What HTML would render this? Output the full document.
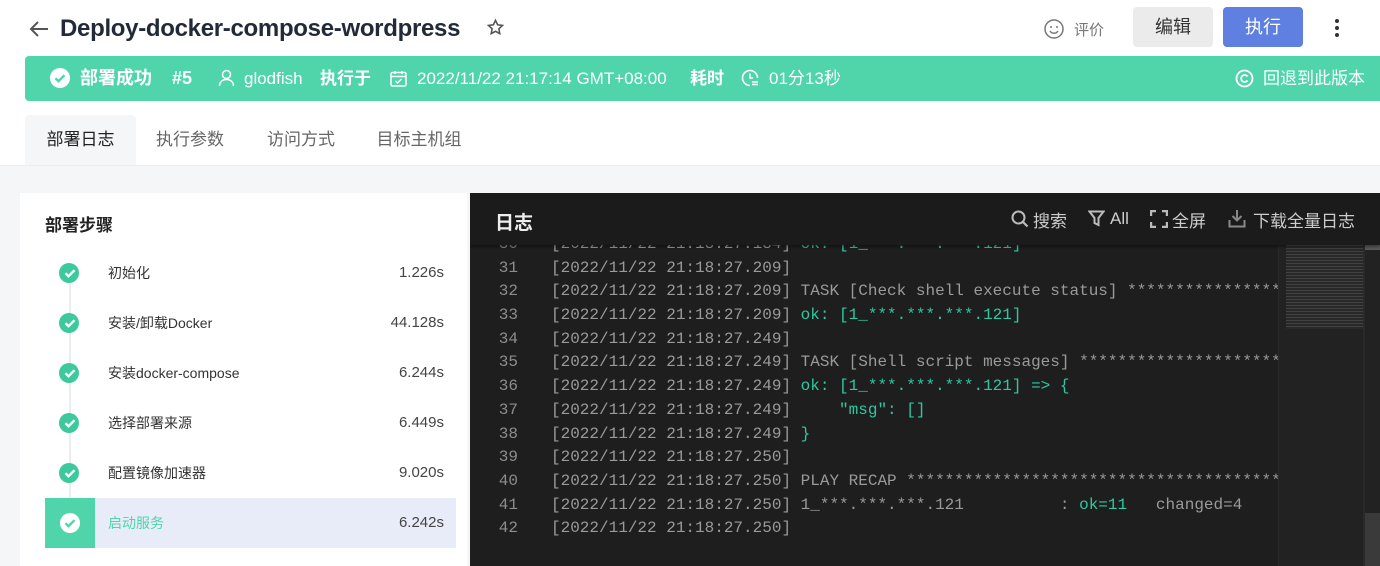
<!DOCTYPE html>
<html><head><meta charset="utf-8"><style>
*{margin:0;padding:0;box-sizing:border-box}
body{width:1380px;height:566px;overflow:hidden;background:#fff;font-family:"Liberation Sans","Noto Sans CJK SC",sans-serif;position:relative}
.abs{position:absolute}
.title{left:60px;top:15px;font-size:24px;font-weight:bold;color:#222a3a;letter-spacing:-0.3px}
.bar{left:25px;top:56px;width:1355px;height:45px;background:#50d4aa;border-radius:4px 0 0 4px;color:#fff;font-size:17px}
.bar span{position:absolute;top:0;line-height:45px;height:45px;white-space:nowrap}
.tabs{top:115px;left:25px;height:50px;font-size:17px;color:#666}
.tab{position:absolute;top:0;height:50px;line-height:50px;text-align:center}
.gray{left:0;top:165px;width:1380px;height:401px;background:#f5f6f8;border-top:1px solid #eceef2}
.left{left:20px;top:193px;width:447px;height:373px;background:#fff}
.step{position:absolute;left:25px;width:411px;height:50px;font-size:14px;color:#333}
.step .c{position:absolute;left:14px;top:15px;width:20px;height:20px;border-radius:50%;background:#3ec99c}
.step .n{position:absolute;left:63px;top:0;line-height:50px}
.step .t{position:absolute;right:12px;top:0;line-height:50px;font-size:15px;color:#444}
.dark{left:470px;top:193px;width:910px;height:373px;background:#1e1e1e;overflow:hidden}
.log{position:absolute;left:0;top:40px;font-family:"Liberation Mono",monospace;font-size:16px;color:#9a9a9a}
.log div{height:23.7px;line-height:23.7px;white-space:pre}
.ln{display:inline-block;width:81px;text-align:right;padding-right:33px;color:#8d8d8d}
.g{color:#2cc9a2}
.hd{position:absolute;left:0;top:0;width:910px;height:52px;background:#1b1b1b;box-shadow:0 2px 3px rgba(0,0,0,.4)}
</style></head><body>
<svg class="abs" style="left:28px;top:18px" width="22" height="22" viewBox="0 0 22 22"><path d="M20 11H3M10 4l-7 7 7 7" stroke="#555" stroke-width="2" fill="none"/></svg>
<div class="abs title">Deploy-docker-compose-wordpress</div>
<svg class="abs" style="left:486px;top:18px" width="19" height="19" viewBox="0 0 24 24"><path d="M12 3l2.7 5.6 6.1.8-4.5 4.2 1.1 6.1L12 16.8 6.6 19.7l1.1-6.1L3.2 9.4l6.1-.8z" stroke="#555" stroke-width="2" fill="none"/></svg>
<svg class="abs" style="left:1043px;top:18px" width="22" height="22" viewBox="0 0 22 22"><circle cx="11" cy="11" r="9" stroke="#777" stroke-width="1.5" fill="none"/><circle cx="8" cy="9" r="1" fill="#777"/><circle cx="14" cy="9" r="1" fill="#777"/><path d="M7 13c2 3 6 3 8 0" stroke="#777" stroke-width="1.5" fill="none"/></svg>
<div class="abs" style="left:1074px;top:19px;font-size:15px;color:#777">评价</div>
<div class="abs" style="left:1133px;top:7px;width:80px;height:40px;background:#ebebeb;border-radius:4px;font-size:18px;color:#333;text-align:center;line-height:40px">编辑</div>
<div class="abs" style="left:1223px;top:7px;width:80px;height:40px;background:#5f7fe1;border-radius:4px;font-size:18px;color:#fff;text-align:center;line-height:40px">执行</div>
<div class="abs" style="left:1335px;top:19px;width:4px;height:4px;border-radius:2px;background:#333;box-shadow:0 7px 0 #333,0 14px 0 #333"></div>

<div class="abs bar">
<svg style="position:absolute;left:25px;top:12px" width="20" height="20" viewBox="0 0 20 20"><circle cx="10" cy="10" r="10" fill="#fff"/><path d="M5.5 10.2l3 3 6-6" stroke="#50d4aa" stroke-width="2.4" fill="none"/></svg>
<span style="left:55px;font-weight:bold;font-size:18px">部署成功</span>
<span style="left:147px;font-weight:bold;font-size:18px">#5</span>
<svg style="position:absolute;left:193px;top:13px" width="17" height="18" viewBox="0 0 17 18"><circle cx="8.5" cy="5.5" r="4" stroke="#fff" stroke-width="1.5" fill="none"/><path d="M1.5 17c0-4 3-6.5 7-6.5s7 2.5 7 6.5" stroke="#fff" stroke-width="1.5" fill="none"/></svg>
<span style="left:219px">glodfish</span>
<span style="left:295px;font-weight:bold">执行于</span>
<svg style="position:absolute;left:365px;top:14px" width="17" height="17" viewBox="0 0 17 17"><rect x="1" y="2.5" width="15" height="13.5" rx="1.5" stroke="#fff" stroke-width="1.5" fill="none"/><path d="M1 6.5h15M5 1v3M12 1v3M5.5 11l2 2 4-4" stroke="#fff" stroke-width="1.5" fill="none"/></svg>
<span style="left:392px">2022/11/22 21:17:14 GMT+08:00</span>
<span style="left:665px;font-weight:bold">耗时</span>
<svg style="position:absolute;left:716px;top:13px" width="19" height="19" viewBox="0 0 19 19"><path d="M16.5 9A7.5 7.5 0 1 0 9 16.5" stroke="#fff" stroke-width="1.6" fill="none"/><path d="M9 4.5V9h3M11 13h6M11 15.5h6" stroke="#fff" stroke-width="1.6" fill="none"/></svg>
<span style="left:744px">01分13秒</span>
<svg style="position:absolute;left:1210px;top:13px" width="19" height="19" viewBox="0 0 19 19"><circle cx="9.5" cy="9.5" r="8" stroke="#fff" stroke-width="1.8" fill="none"/><path d="M12.5 7.5a3.5 3.5 0 1 0 0 4" stroke="#fff" stroke-width="1.8" fill="none"/></svg>
<span style="left:1238px">回退到此版本</span>
</div>

<div class="abs" style="left:25px;top:115px;width:111px;height:51px;background:#f5f6f8;border-radius:4px 4px 0 0"></div>
<div class="abs tabs">
<div class="tab" style="left:0;width:111px;color:#222">部署日志</div>
<div class="tab" style="left:117px;width:96px">执行参数</div>
<div class="tab" style="left:228px;width:96px">访问方式</div>
<div class="tab" style="left:339px;width:110px">目标主机组</div>
</div>
<div class="abs gray"></div>

<div class="abs left">
<div style="position:absolute;left:25px;top:18px;font-size:17px;font-weight:bold;color:#222">部署步骤</div>
<div style="position:absolute;left:49px;top:80px;width:2px;height:230px;background:#ececec"></div>
<div class="step" style="top:55px"><div class="c"></div><div class="n">初始化</div><div class="t">1.226s</div></div>
<div class="step" style="top:105px"><div class="c"></div><div class="n">安装/卸载Docker</div><div class="t">44.128s</div></div>
<div class="step" style="top:155px"><div class="c"></div><div class="n">安装docker-compose</div><div class="t">6.244s</div></div>
<div class="step" style="top:205px"><div class="c"></div><div class="n">选择部署来源</div><div class="t">6.449s</div></div>
<div class="step" style="top:255px"><div class="c"></div><div class="n">配置镜像加速器</div><div class="t">9.020s</div></div>
<div class="step" style="top:305px;background:#e8ecf8"><div style="position:absolute;left:0;top:0;width:50px;height:50px;background:#50d4aa"></div><div class="c" style="background:#fff;left:15px"></div><div class="n" style="color:#50d4aa">启动服务</div><div class="t">6.242s</div></div>
</div>
<div class="abs" style="left:0;top:0">
<svg style="position:absolute;left:60px;top:263px" width="20" height="270" viewBox="0 0 20 270">
<g stroke="#fff" stroke-width="2.4" fill="none"><path d="M5.5 10.2l3 3 6-6"/><path d="M5.5 60.2l3 3 6-6"/><path d="M5.5 110.2l3 3 6-6"/><path d="M5.5 160.2l3 3 6-6"/><path d="M5.5 210.2l3 3 6-6"/></g>
<path d="M5.5 260.2l3 3 6-6" stroke="#50d4aa" stroke-width="2.4" fill="none"/>
</svg></div>

<div class="abs dark">
<div class="log"><div><span class="ln">30</span>[2022/11/22 21:18:27.184] <span class="g">ok: [1_***.***.***.121]</span></div><div><span class="ln">31</span>[2022/11/22 21:18:27.209]</div><div><span class="ln">32</span>[2022/11/22 21:18:27.209] TASK [Check shell execute status] ********************</div><div><span class="ln">33</span>[2022/11/22 21:18:27.209] <span class="g">ok: [1_***.***.***.121]</span></div><div><span class="ln">34</span>[2022/11/22 21:18:27.249]</div><div><span class="ln">35</span>[2022/11/22 21:18:27.249] TASK [Shell script messages] *************************</div><div><span class="ln">36</span>[2022/11/22 21:18:27.249] <span class="g">ok: [1_***.***.***.121] =&gt; {</span></div><div><span class="ln">37</span>[2022/11/22 21:18:27.249] <span class="g">    "msg": []</span></div><div><span class="ln">38</span>[2022/11/22 21:18:27.249] <span class="g">}</span></div><div><span class="ln">39</span>[2022/11/22 21:18:27.250]</div><div><span class="ln">40</span>[2022/11/22 21:18:27.250] PLAY RECAP ***************************************</div><div><span class="ln">41</span>[2022/11/22 21:18:27.250] 1_***.***.***.121          : <span class="g">ok=11</span>   changed=4</div><div><span class="ln">42</span>[2022/11/22 21:18:27.250]</div></div>
<div style="position:absolute;left:808px;top:52px;width:102px;height:321px;background:#222;border-left:1px solid #2a2a2a"></div>
<div style="position:absolute;left:816px;top:52px;width:79px;height:84px;background:repeating-linear-gradient(#4a4a4a 0 1px,#2a2a2a 1px 3px);opacity:.8"></div>
<div style="position:absolute;left:895px;top:52px;width:15px;height:5px;background:#5a5a5a"></div>
<div style="position:absolute;left:893px;top:52px;width:2px;height:321px;background:#2a2a2a"></div>
<div style="position:absolute;left:895px;top:320px;width:15px;height:53px;background:#3a3a3a"></div>
<div class="hd"></div>
<div style="position:absolute;left:25px;top:15px;font-size:19px;font-weight:bold;color:#eee">日志</div>
<svg style="position:absolute;left:541px;top:17px" width="18" height="18" viewBox="0 0 18 18"><circle cx="7.5" cy="7.5" r="6" stroke="#bbb" stroke-width="2" fill="none"/><path d="M12 12l4.5 4.5" stroke="#bbb" stroke-width="2.2"/></svg>
<div style="position:absolute;left:563px;top:14px;font-size:17px;color:#ccc">搜索</div>
<svg style="position:absolute;left:618px;top:17px" width="17" height="17" viewBox="0 0 17 17"><path d="M1.5 1.5h14l-5 6.5v7l-4-2V8z" stroke="#bbb" stroke-width="2" fill="none"/></svg>
<div style="position:absolute;left:640px;top:16px;font-size:17px;color:#ccc">All</div>
<svg style="position:absolute;left:680px;top:17px" width="18" height="18" viewBox="0 0 18 18"><path d="M1 6V1h5M12 1h5v5M17 12v5h-5M6 17H1v-5" stroke="#bbb" stroke-width="2.4" fill="none"/></svg>
<div style="position:absolute;left:702px;top:14px;font-size:17px;color:#ccc">全屏</div>
<svg style="position:absolute;left:758px;top:16px" width="18" height="19" viewBox="0 0 18 19"><path d="M9 1v10M4.5 7l4.5 4.5L13.5 7M1.5 11v6.5h15V11" stroke="#888" stroke-width="2" fill="none"/></svg>
<div style="position:absolute;left:783px;top:14px;font-size:17px;color:#ccc">下载全量日志</div>
</div>
</body></html>
